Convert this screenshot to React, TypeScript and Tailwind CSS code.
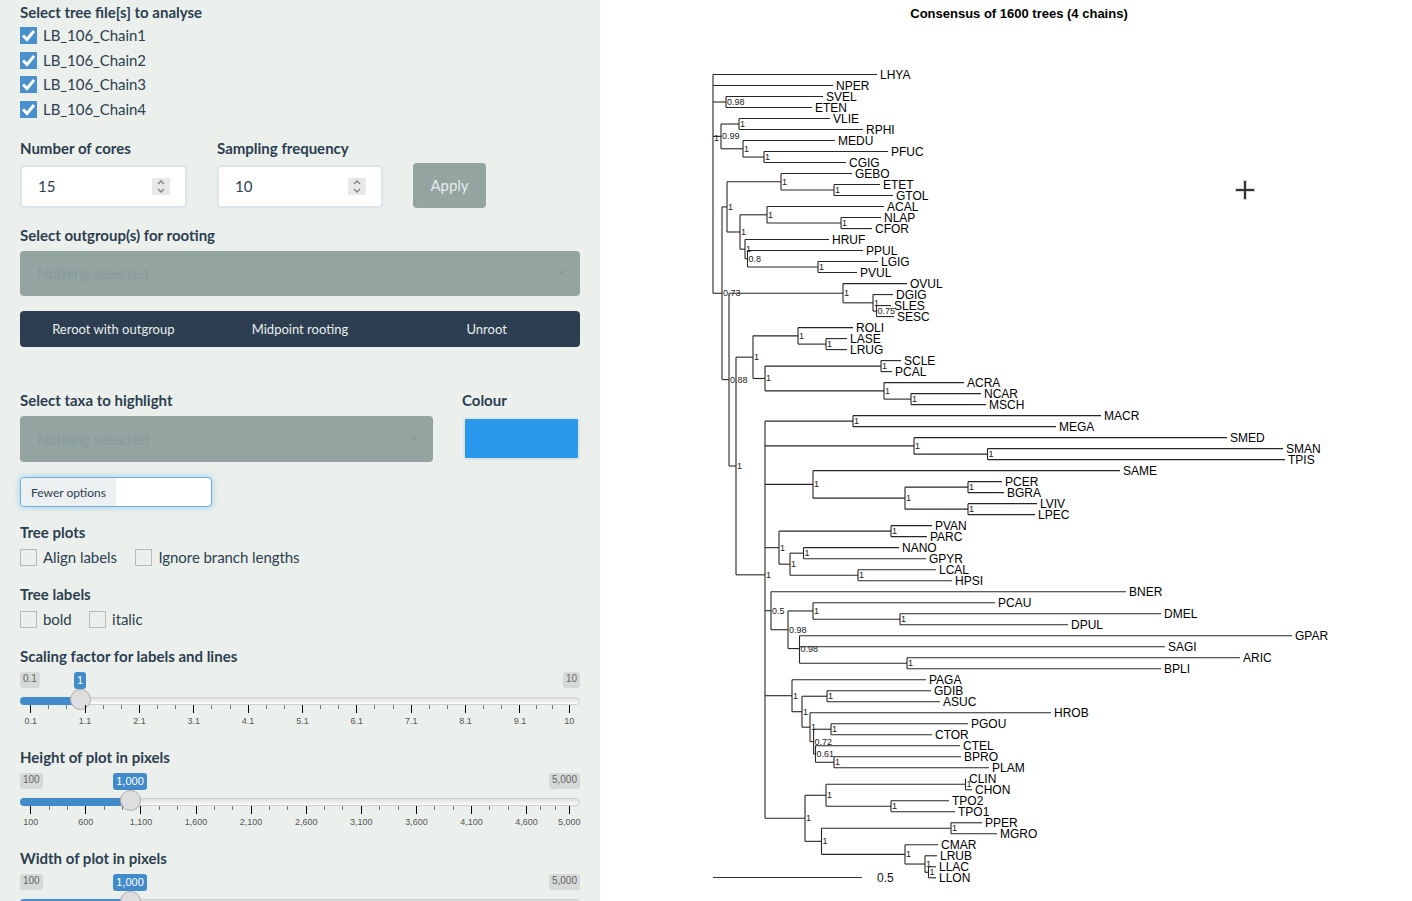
import React from 'react';

type Tip = { n: string; e: number };
type Clade = { x: number; c: (Tip | Clade)[]; s?: string };

const t = (n: string, e: number): Tip => ({ n, e });
const node = (x: number, c: (Tip | Clade)[], s?: string): Clade => ({ x, c, s });

// tree topology: x is pixel position of each node, e is the tip end
const tree: Clade = node(713, [
  t('LHYA', 877),
  t('NPER', 833),
  node(726, [t('SVEL', 823), t('ETEN', 812)], '0.98'),
  node(721, [
    node(739, [t('VLIE', 830), t('RPHI', 863)]),
    node(743, [t('MEDU', 835), node(764, [t('PFUC', 888), t('CGIG', 846)])]),
  ], '0.99'),
  node(722, [
    node(727, [
      node(781, [t('GEBO', 852), node(834, [t('ETET', 880), t('GTOL', 893)])]),
      node(740, [
        node(767, [t('ACAL', 884), node(841, [t('NLAP', 881), t('CFOR', 872)])]),
        node(745, [
          t('HRUF', 829),
          node(747.5, [t('PPUL', 863), node(818, [t('LGIG', 878), t('PVUL', 857)])], '0.8'),
        ]),
      ]),
    ]),
    node(729, [
      node(843, [
        t('OVUL', 907),
        node(873, [t('DGIG', 893), node(876.5, [t('SLES', 891), t('SESC', 894)], '0.75')]),
      ]),
      node(736, [
        node(753, [
          node(798, [t('ROLI', 853), node(826, [t('LASE', 847), t('LRUG', 847)])]),
          node(765, [
            node(881, [t('SCLE', 901), t('PCAL', 892)]),
            node(884, [t('ACRA', 964), node(911, [t('NCAR', 981), t('MSCH', 986)])]),
          ]),
        ]),
        node(765, [
          node(853, [t('MACR', 1101), t('MEGA', 1056)]),
          node(914, [t('SMED', 1227), node(987.5, [t('SMAN', 1283), t('TPIS', 1285)])]),
          node(813, [
            t('SAME', 1120),
            node(905, [
              node(968, [t('PCER', 1002), t('BGRA', 1004)]),
              node(968, [t('LVIV', 1037), t('LPEC', 1035)]),
            ]),
          ]),
          node(779, [
            node(891, [t('PVAN', 932), t('PARC', 927)]),
            node(790, [
              node(803.5, [t('NANO', 899), t('GPYR', 926)]),
              node(858, [t('LCAL', 936), t('HPSI', 952)]),
            ]),
          ]),
          node(771, [
            t('BNER', 1126),
            node(788, [
              node(813, [t('PCAU', 995), node(900, [t('DMEL', 1161), t('DPUL', 1068)])]),
              node(799.5, [
                t('GPAR', 1292),
                t('SAGI', 1165),
                node(907, [t('ARIC', 1240), t('BPLI', 1161)]),
              ], '0.98'),
            ], '0.98'),
          ], '0.5'),
          node(792, [
            t('PAGA', 926),
            node(802, [
              node(827, [t('GDIB', 931), t('ASUC', 940)]),
              node(810, [
                t('HROB', 1051),
                node(813.6, [
                  node(831, [t('PGOU', 968), t('CTOR', 932)]),
                  node(815.5, [
                    t('CTEL', 960),
                    node(834, [t('BPRO', 961), t('PLAM', 989)]),
                  ], '0.61'),
                ], '0.72'),
              ]),
            ]),
          ]),
          node(805, [
            node(826, [
              node(965.5, [t('CLIN', 966), t('CHON', 972)]),
              node(891, [t('TPO2', 949), t('TPO1', 955)]),
            ]),
            node(821.5, [
              node(951, [t('PPER', 982), t('MGRO', 997)]),
              node(905, [
                t('CMAR', 938),
                node(925, [t('LRUB', 937), node(928.5, [t('LLAC', 936), t('LLON', 936)])]),
              ]),
            ]),
          ]),
        ]),
      ]),
    ], '0.88'),
  ], '0.73'),
]);

const PLOT_X = 600;

function drawTree() {
  const lines: React.ReactNode[] = [];
  const labels: React.ReactNode[] = [];
  let row = 0;
  let key = 0;

  const seg = (x1: number, y1: number, x2: number, y2: number) => {
    lines.push(<line key={key++} x1={x1 - PLOT_X} y1={y1} x2={x2 - PLOT_X} y2={y2} />);
  };

  const walk = (n: Clade): number => {
    const ys = n.c.map(ch => {
      if ('n' in ch) {
        const y = 74.5 + row * 11.004;
        row += 1;
        seg(n.x, y, ch.e, y);
        labels.push(
          <text key={key++} x={ch.e + 3 - PLOT_X} y={y + 4.5} fontSize={12} fill="#000">{ch.n}</text>,
        );
        return y;
      }
      const y = walk(ch);
      seg(n.x, y, ch.x, y);
      return y;
    });
    seg(n.x, Math.min(...ys), n.x, Math.max(...ys));
    const my = ys.reduce((a, b) => a + b, 0) / ys.length;
    labels.push(
      <text key={key++} x={n.x + 1 - PLOT_X} y={my + 3} fontSize={9} fill="#222">{n.s ?? '1'}</text>,
    );
    return my;
  };

  walk(tree);
  return { lines, labels };
}

const Heading = ({ children, className = '' }: { children: React.ReactNode; className?: string }) => (
  <div className={`text-[15px] leading-[21px] font-bold text-[#2c3e50] ${className}`}>{children}</div>
);

const Check = ({ label, on = false }: { label: string; on?: boolean }) => (
  <label className="flex items-center h-[17px] text-[15px] text-[#2c3e50]">
    {on ? (
      <span className="w-[17px] h-[17px] bg-[#4a90cc] flex items-center justify-center">
        <svg width="17" height="17" viewBox="0 0 17 17" fill="none" stroke="#fff" strokeWidth="3">
          <path d="M3 8.5 L7 12.5 L14 4" />
        </svg>
      </span>
    ) : (
      <span className="w-[17px] h-[17px] border border-[#b4bcbc]" />
    )}
    <span className="ml-[6px] tracking-[-0.06px]">{label}</span>
  </label>
);

const NumberBox = ({ value }: { value: string }) => (
  <div className="h-[43px] rounded-[4px] border-2 border-[#dce4ec] bg-white flex items-center justify-between pl-[16px] pr-[15px] text-[15px] text-[#2c3e50]">
    {value}
    <span className="w-[18px] h-[17px] bg-[#e8e8e8] flex flex-col items-center justify-center">
      <svg width="10" height="15" viewBox="0 0 10 15" fill="none" stroke="#808080" strokeWidth="1.3">
        <path d="M2 5 L5 2 L8 5 M2 10 L5 13 L8 10" />
      </svg>
    </span>
  </div>
);

const Picker = ({ className = '' }: { className?: string }) => (
  <div className={`bg-[#93a4a1] rounded-[4px] flex items-center justify-between pl-[17px] pr-[15px] text-[15px] text-[#8a9a9b] ${className}`}>
    Nothing selected
    <span className="w-0 h-0 border-x-[4px] border-x-transparent border-t-[4px] border-t-[#87979a]" />
  </div>
);

interface SliderProps {
  min: string;
  max: string;
  value: string;
  bubbleLeft: number;
  bubbleWidth: number;
  handle: number;
  ticks: { at: number; text: string }[];
}

const Slider = ({ min, max, value, bubbleLeft, bubbleWidth, handle, ticks }: SliderProps) => {
  const minors: number[] = [];
  ticks.slice(0, -1).forEach((tk, i) => {
    const gap = ticks[i + 1].at - tk.at;
    minors.push(tk.at + gap / 3, tk.at + (2 * gap) / 3);
  });
  return (
    <div className="relative h-[75px] mt-[5px] font-['Liberation_Sans',sans-serif]">
      <div className="flex justify-between items-start">
        <span className="h-[16px] px-[3px] rounded-[3px] bg-[#d5d9d8] text-[10px] leading-[14px] text-[#666]">{min}</span>
        <span className="h-[16px] px-[3px] rounded-[3px] bg-[#d5d9d8] text-[10px] leading-[14px] text-[#666]">{max}</span>
      </div>
      <span
        className="absolute top-0 h-[17px] rounded-[3px] bg-[#428bca] text-white text-[11px] leading-[17px] text-center"
        style={{ left: bubbleLeft, width: bubbleWidth }}
      >
        {value}
      </span>
      <div className="relative mt-[9px] h-[8px] rounded-full border border-[#cfcfcf] bg-gradient-to-b from-[#dedede] to-[#fdfdfd]">
        <div className="absolute -left-px -top-px h-[8px] rounded-l-full bg-[#428bca]" style={{ width: handle }} />
      </div>
      <span
        className="absolute top-[17px] w-[21px] h-[21px] rounded-full bg-[#dedede] border border-[#aaaaaa]"
        style={{ left: handle - 10.5 }}
      />
      <div className="relative">
        {ticks.map(tk => (
          <React.Fragment key={tk.at}>
            <span className="absolute top-0 w-px h-[8px] bg-black" style={{ left: tk.at }} />
            <span
              className="absolute top-[10px] -translate-x-1/2 text-[9px] leading-[12px] text-[#555] whitespace-nowrap"
              style={{ left: tk.at + 0.5 }}
            >
              {tk.text}
            </span>
          </React.Fragment>
        ))}
        {minors.map(m => (
          <span key={m} className="absolute top-0 w-px h-[4px] bg-[#777]" style={{ left: m }} />
        ))}
      </div>
    </div>
  );
};

const scaleTicks = ['0.1', '1.1', '2.1', '3.1', '4.1', '5.1', '6.1', '7.1', '8.1', '9.1', '10'].map((text, i) => ({
  at: i === 10 ? 548.7 : 10.2 + i * 54.36,
  text,
}));

const pixelTicks = ['100', '600', '1,100', '1,600', '2,100', '2,600', '3,100', '3,600', '4,100', '4,600', '5,000'].map((text, i) => ({
  at: i === 10 ? 548.7 : 10.2 + i * 55.1,
  text,
}));

const App = () => {
  const { lines, labels } = drawTree();

  return (
    <div className="flex h-screen overflow-hidden bg-white font-['Lato',sans-serif]">
      <aside className="w-[600px] shrink-0 bg-[#ebf0ec] px-[20px] pt-[2px] text-[#2c3e50]">
        <Heading>Select tree file[s] to analyse</Heading>
        <div className="mt-[4px] flex flex-col gap-[7.6px]">
          <Check on label="LB_106_Chain1" />
          <Check on label="LB_106_Chain2" />
          <Check on label="LB_106_Chain3" />
          <Check on label="LB_106_Chain4" />
        </div>

        <div className="mt-[20px] flex">
          <div className="w-[167px]">
            <Heading className="mb-[6px]">Number of cores</Heading>
            <NumberBox value="15" />
          </div>
          <div className="w-[166px] ml-[30px]">
            <Heading className="mb-[6px]">Sampling frequency</Heading>
            <NumberBox value="10" />
          </div>
          <button className="ml-[30px] self-end w-[73px] h-[45px] rounded-[4px] bg-[#93a4a1] text-[15px] text-[#e6ecea]">Apply</button>
        </div>

        <Heading className="mt-[17px]">Select outgroup(s) for rooting</Heading>
        <Picker className="mt-[5px] h-[45px]" />

        <div className="mt-[15px] h-[36px] rounded-[4px] bg-[#2c3e50] grid grid-cols-3 pt-px text-[13px] text-[#e8eeee]">
          <button>Reroot with outgroup</button>
          <button>Midpoint rooting</button>
          <button>Unroot</button>
        </div>

        <div className="mt-[43px] flex">
          <div className="w-[413px]">
            <Heading className="mb-[5px]">Select taxa to highlight</Heading>
            <Picker className="h-[46px]" />
          </div>
          <div className="ml-[30px] flex-1">
            <Heading className="mb-[6px] -ml-px">Colour</Heading>
            <div className="h-[43px] border-2 border-[#dce4ec] rounded-[3px] bg-[#2b99eb]" />
          </div>
        </div>

        <div className="mt-[15px] w-[192px] h-[30px] flex rounded-[4px] border border-[#66afe9] bg-white overflow-hidden shadow-[0_0_6px_rgba(102,175,233,0.6)]">
          <span className="w-[95px] bg-[#ecf0f1] pl-[10px] text-[12px] leading-[30px] text-[#2c3e50]">Fewer options</span>
        </div>

        <Heading className="mt-[15px]">Tree plots</Heading>
        <div className="mt-[6px] flex gap-[18.5px]">
          <Check label="Align labels" />
          <Check label="Ignore branch lengths" />
        </div>

        <Heading className="mt-[18px]">Tree labels</Heading>
        <div className="mt-[6px] flex gap-[17.5px]">
          <Check label="bold" />
          <Check label="italic" />
        </div>

        <Heading className="mt-[18px]">Scaling factor for labels and lines</Heading>
        <Slider min="0.1" max="10" value="1" bubbleLeft={54} bubbleWidth={12} handle={60} ticks={scaleTicks} />

        <Heading>Height of plot in pixels</Heading>
        <Slider min="100" max="5,000" value="1,000" bubbleLeft={93} bubbleWidth={34} handle={110} ticks={pixelTicks} />

        <Heading className="mb-px">Width of plot in pixels</Heading>
        <Slider min="100" max="5,000" value="1,000" bubbleLeft={93} bubbleWidth={34} handle={110} ticks={pixelTicks} />
      </aside>

      <main className="relative flex-1 font-['Liberation_Sans',sans-serif]">
        <svg width="812" height="901" viewBox="0 0 812 901" className="block">
          <text x="419" y="18" textAnchor="middle" fontSize="13" fontWeight="700" fill="#000">Consensus of 1600 trees (4 chains)</text>
          <g stroke="#262626" strokeWidth="1.1">{lines}</g>
          {labels}
          <line x1="113" y1="877.5" x2="262" y2="877.5" stroke="#333" />
          <text x="277" y="882" fontSize="12" fill="#111">0.5</text>
        </svg>
        {/* mouse cursor caught in the screenshot */}
        <svg width="20" height="20" viewBox="0 0 20 20" className="absolute left-[635px] top-[180px]">
          <path d="M10 0 V20 M0 10 H20" stroke="#d8d8d8" strokeWidth="4" />
          <path d="M10 1 V19 M1 10 H19" stroke="#333" strokeWidth="2" />
        </svg>
      </main>
    </div>
  );
};

export default App;
